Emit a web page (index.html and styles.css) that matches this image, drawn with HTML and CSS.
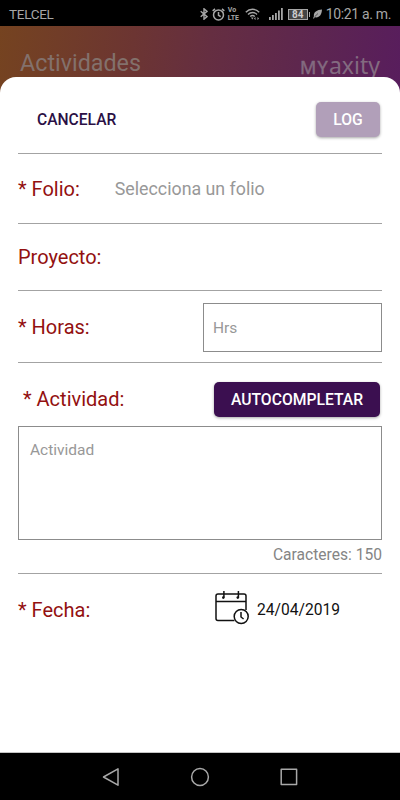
FILE: index.html
```html
<!DOCTYPE html>
<html lang="es">
    <head>
        <meta charset="UTF-8" />
        <meta name="viewport" content="width=device-width, initial-scale=1.0" />
        <title>Actividades</title>
        <link rel="stylesheet" href="styles.css">
    </head>
    <body>
        <div class="status-bar">
            <span class="carrier">TELCEL</span>
            <div class="status-icons">
                <svg class="bluetooth" width="8" height="12" viewBox="0 0 8 12">
                    <path d="M.7 3.2L7 8.6l-3 2.6V.8l3 2.6L.7 8.8" />
                </svg>
                <svg class="alarm" width="13" height="13" viewBox="0 0 12 12">
                    <circle cx="6" cy="6.4" r="4.6" />
                    <path d="M6 3.7v3l2 1.2M.6 2.6L2.8.8M11.4 2.6L9.2.8" />
                </svg>
                <span class="volte"><span>Vo</span><span>LTE</span></span>
                <svg class="wifi" width="15" height="12" viewBox="0 0 15 12">
                    <path d="M.8 4.2C4.6.3 10.4.3 14.2 4.2M3 6.4c2.6-2.6 6.4-2.6 9 0M5.2 8.5c1.4-1.3 3.2-1.3 4.6 0" />
                    <path class="fill" d="M6 9.6h2.6L7.3 11.5zM9 10.5l1.5-1.6v3.2zM14 10.5l-1.5-1.6v3.2z" />
                </svg>
                <svg class="signal" width="14" height="12" viewBox="0 0 14 12">
                    <path class="fill" d="M0 9h1.8v3H0zM3 7h1.8v5H3zM6 5h1.8v7H6zM9 2.5h1.8V12H9zM12 0h1.8v12H12z" />
                </svg>
                <span class="battery">84</span>
                <svg class="leaf" width="9" height="10" viewBox="0 0 9 10">
                    <path class="fill" d="M9 .5C4 .8.4 3 .9 7.2L0 9.5h1l.8-1.2C6.5 9.2 8.7 5.5 9 .5z" />
                    <path class="vein" d="M1.6 7.8L5 4.5" />
                </svg>
            </div>
            <span class="clock">10:21 a. m.</span>
        </div>

        <header class="app-header">
            <h1>Actividades</h1>
            <span class="brand"><span class="brand-my">MY</span>axity</span>
        </header>

        <form class="sheet" id="activity-form">
            <div class="row actions">
                <button type="button" class="btn-text">CANCELAR</button>
                <button type="submit" class="btn btn-log" disabled>LOG</button>
            </div>
            <div class="row folio">
                <label>* Folio:</label>
                <span class="select">Selecciona un folio</span>
            </div>
            <div class="row proyecto">
                <label>Proyecto:</label>
            </div>
            <div class="row horas">
                <label for="horas">* Horas:</label>
                <input type="text" id="horas" name="horas" placeholder="Hrs">
            </div>
            <div class="row actividad">
                <div class="actividad-head">
                    <label for="actividad">* Actividad:</label>
                    <button type="button" class="btn btn-auto">AUTOCOMPLETAR</button>
                </div>
                <textarea id="actividad" name="actividad" placeholder="Actividad"></textarea>
                <div class="counter">Caracteres: 150</div>
            </div>
            <div class="row fecha">
                <label>* Fecha:</label>
                <div class="date">
                    <svg class="calendar" width="34" height="35" viewBox="0 0 34 35">
                        <path d="M19.5 30.5H3a2 2 0 0 1-2-2V6a2 2 0 0 1 2-2h26a2 2 0 0 1 2 2v14M1 11.4h30M8.9 1v6.5M23.4 1v6.5" />
                        <circle class="knob" cx="8.3" cy="7.6" r="1.3" />
                        <circle class="knob" cx="22.8" cy="7.6" r="1.3" />
                        <circle class="face" cx="26.2" cy="26.5" r="7" />
                        <path d="M26 22v5l2.6 2" />
                    </svg>
                    <span>24/04/2019</span>
                </div>
            </div>
        </form>

        <nav class="nav-bar">
            <svg width="18" height="20" viewBox="0 0 18 20">
                <path d="M16 1.8v16.4L1.5 10z" />
            </svg>
            <svg width="20" height="20" viewBox="0 0 20 20">
                <circle cx="10" cy="10" r="8.4" />
            </svg>
            <svg width="18" height="18" viewBox="0 0 18 18">
                <rect x="1.2" y="1.2" width="15.4" height="15.4" />
            </svg>
        </nav>
    </body>
</html>
```

FILE: styles.css
```css
:root {
  --primary: #3b0f50;
  --label: #931010;
  --line: #a3a3a3;
  --border: #8c8c8c;
  --hint: #989898;
  --status: #a6a6a6;
  --font: Roboto, sans-serif;
}

* {
  box-sizing: border-box;
  margin: 0;
  padding: 0;
}

body {
  font-family: var(--font);
  background: #000;
  height: 800px;
  display: flex;
  flex-direction: column;
  overflow: hidden;
}

svg {
  display: block;
  flex: none;
  fill: none;
}

/* Status bar */
.status-bar {
  height: 26px;
  flex: none;
  display: flex;
  align-items: center;
  padding: 2px 9px 0;
  color: var(--status);
  white-space: nowrap;
}

.carrier {
  font-size: 13.5px;
  letter-spacing: -0.3px;
}

.status-icons {
  display: flex;
  align-items: center;
  margin-left: auto;
}

.status-icons svg {
  stroke: var(--status);
  stroke-width: 1.4;
}

.status-icons .fill {
  fill: var(--status);
  stroke: none;
}

.alarm { margin-left: 4px; }
.wifi { margin-left: 4px; }
.signal { margin-left: 9px; }
.leaf { margin-left: 5px; }

.status-icons .vein {
  stroke: #000;
  stroke-width: 0.5;
}

.volte {
  display: flex;
  flex-direction: column;
  margin-left: 3px;
  width: 13px;
  font-size: 7px;
  line-height: 8px;
  font-weight: 700;
}

.battery {
  position: relative;
  margin-left: 5px;
  width: 20px;
  height: 11px;
  border: 1px solid var(--status);
  background: #444;
  color: #ccc;
  font-size: 10px;
  line-height: 9px;
  font-weight: 700;
  text-align: center;
}

.battery::after {
  content: "";
  position: absolute;
  right: -3px;
  top: 2px;
  width: 1px;
  height: 5px;
  background: var(--status);
}

.clock {
  margin-left: 4px;
  font-size: 14px;
  letter-spacing: -0.35px;
}

/* App header, dimmed behind the sheet */
.app-header {
  height: 71px;
  flex: none;
  margin-bottom: -20px;
  padding: 23px 20px 0;
  display: flex;
  justify-content: space-between;
  background: linear-gradient(97deg, #754320 0%, #6c3532 33%, #652e41 52%, #5c2551 80%, #581d5d 100%);
  color: #83716c;
}

.app-header h1 {
  font-size: 23.3px;
  line-height: 28px;
  font-weight: 400;
}

.brand {
  font-family: "Noto Sans", sans-serif;
  font-size: 23px;
  line-height: 32px;
  color: #836b80;
}

.brand-my {
  font-size: 18px;
  letter-spacing: 1.2px;
  -webkit-text-stroke: 0.5px #836b80;
}

/* Form sheet */
.sheet {
  position: relative;
  height: 676px;
  flex: none;
  background: #fff;
  border-radius: 16px 16px 0 0;
  border-bottom: 1px solid #c4c4c4;
  padding: 0 18px;
}

.row {
  display: flex;
  align-items: center;
  border-bottom: 1px solid var(--line);
}

label {
  font-size: 20px;
  line-height: 24px;
  color: var(--label);
}

.actions {
  height: 77px;
  justify-content: space-between;
  padding: 8px 2px 0 19px;
}

.btn-text {
  margin-top: 2px;
  border: none;
  background: none;
  color: #2b1045;
  font-family: inherit;
  font-size: 15.6px;
  font-weight: 500;
}

.btn {
  height: 35px;
  border: none;
  border-radius: 5px;
  background: var(--primary);
  color: #fff;
  font-family: inherit;
  font-size: 15.7px;
  font-weight: 500;
  box-shadow: 0 1px 3px rgba(0, 0, 0, 0.35);
}

.btn-log {
  width: 64px;
  background: #b19fb9;
}

.btn-auto {
  width: 166px;
}

.folio {
  height: 70px;
}

.select {
  margin-left: 35px;
  color: var(--hint);
  font-size: 17.8px;
}

.proyecto {
  height: 67px;
}

.horas {
  height: 72px;
  justify-content: space-between;
}

input,
textarea {
  border: 1px solid var(--border);
  background: #fff;
  font-family: inherit;
  font-size: 15.5px;
  outline: none;
}

input {
  width: 179px;
  height: 49px;
  margin-top: 2px;
  padding: 0 9px;
}

textarea {
  display: block;
  width: 100%;
  height: 114px;
  margin-top: 9px;
  padding: 14px 11px;
  resize: none;
}

::placeholder {
  color: var(--hint);
}

.actividad {
  display: block;
  height: 211px;
  padding-top: 19px;
}

.actividad-head {
  display: flex;
  align-items: center;
  justify-content: space-between;
  padding: 0 2px 0 5px;
}

.actividad-head label {
  margin-bottom: 1px;
}

.counter {
  margin-top: 6px;
  text-align: right;
  font-size: 15.6px;
  line-height: 19px;
  color: #858585;
}

.fecha {
  height: 71px;
  justify-content: space-between;
  border-bottom: none;
}

.date {
  display: flex;
  align-items: center;
  width: 167px;
  font-size: 15.6px;
  color: #111;
}

.calendar {
  margin: -4px 8px 0 0;
  stroke: #111;
  stroke-width: 1.5;
}

.calendar .knob {
  fill: #111;
  stroke: none;
}

.calendar .face {
  fill: #fff;
}

/* System navigation */
.nav-bar {
  flex: 1;
  display: flex;
  align-items: center;
  justify-content: space-between;
  padding: 0 102px;
}

.nav-bar svg {
  stroke: #a8a8a8;
  stroke-width: 1.5;
  stroke-linejoin: round;
}
```
